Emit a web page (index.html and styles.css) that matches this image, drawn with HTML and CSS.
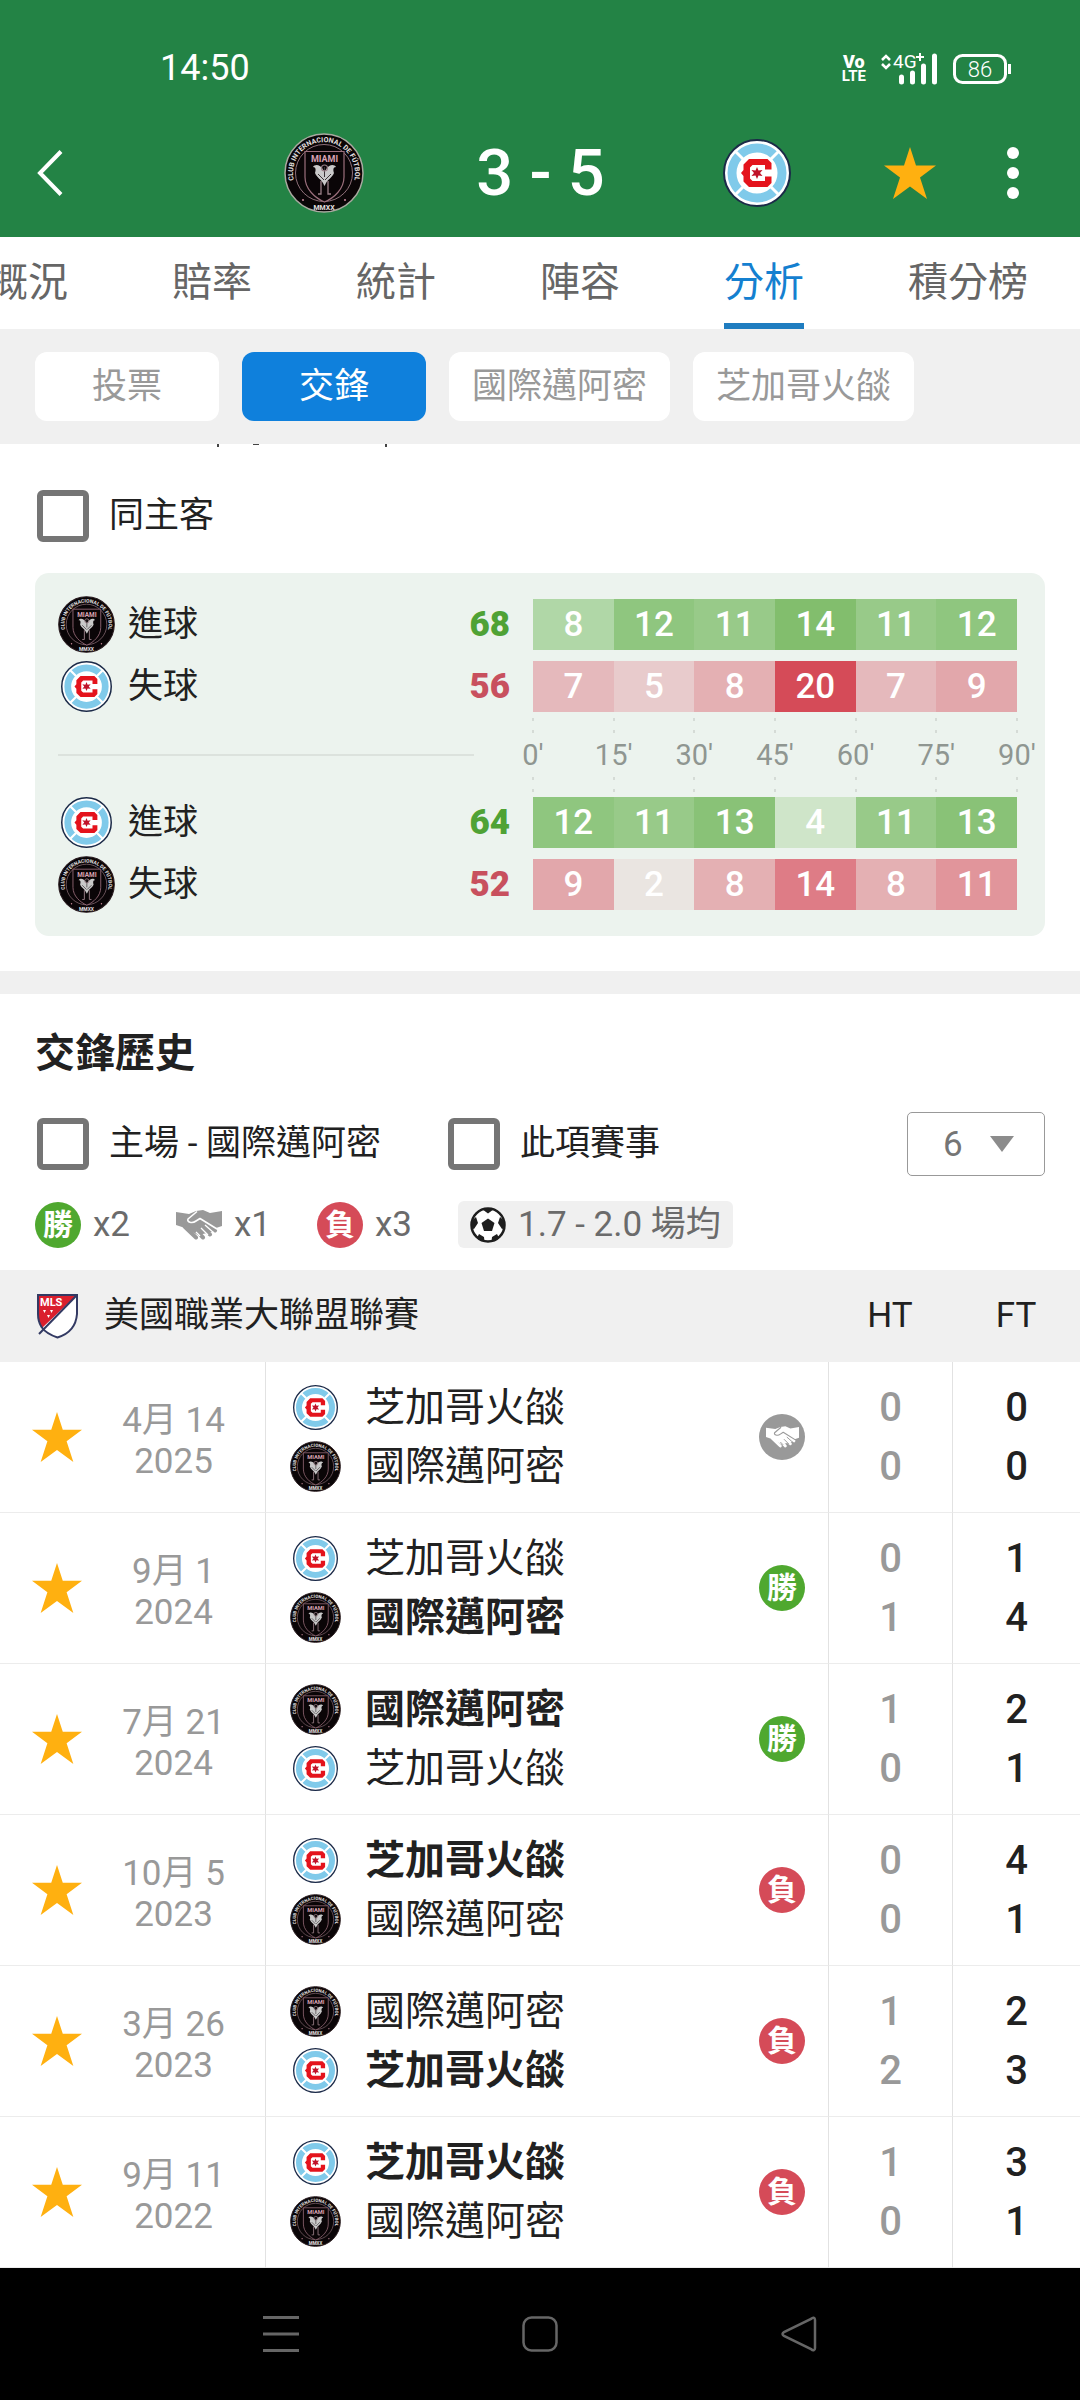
FILE: index.html
```html
<!DOCTYPE html>
<html lang="zh-Hant">
<head>
    <meta charset="UTF-8">
    <meta name="viewport" content="width=device-width, initial-scale=1.0">
    <title>國際邁阿密 3 - 5 芝加哥火燄</title>
    <link rel="stylesheet" href="styles.css">
</head>
<body>
    <!-- shared icons -->
    <svg class="sprite" aria-hidden="true">
        <symbol id="miami" viewBox="0 0 80 80">
            <circle cx="40" cy="40" r="39" fill="#0a0507" stroke="currentColor" stroke-width="1.5"/>
            <circle cx="40" cy="40" r="28.5" fill="none" stroke="#8d6f78" stroke-width="1"/>
            <path id="miamiRing" d="M14 57A31 31 0 1 1 66 57" fill="none"/>
            <text class="crest-text" font-size="7" text-anchor="middle"><textPath href="#miamiRing" startOffset="50%">CLUB INTERNACIONAL DE FÚTBOL</textPath></text>
            <path d="M21 18.500H60V44C60 56 50 65 40.500 69C31 65 21 56 21 44Z" fill="#0a0507" stroke="#9b6f7c" stroke-width="1.200"/>
            <text class="crest-text pink" x="40.500" y="29" font-size="9" text-anchor="middle">MIAMI</text>
            <path d="M40 38C36 31 31 31 29 34C32 34 32 37 31 40C33 45 37 46 39 50L40.500 53L42 50C44 46 48 45 50 40C49 37 49 34 52 34C50 31 45 31 41 38Z" fill="#c9c9c9"/>
            <path d="M34 41L40 47M47 41L41 47M40.500 34V44" stroke="#3a3336" stroke-width="1" fill="none"/>
            <circle cx="40.500" cy="35" r="3" fill="none" stroke="#9b8088" stroke-width="1.200"/>
            <path d="M37 48V61H34M44 48V61H47" fill="none" stroke="#9b8088" stroke-width="1.300"/>
            <text class="crest-text" x="40" y="77" font-size="7" text-anchor="middle">MMXX</text>
            <circle cx="19" cy="67" r="1" fill="#c98a9c"/>
            <circle cx="61" cy="67" r="1" fill="#c98a9c"/>
        </symbol>
        <symbol id="fire" viewBox="0 0 68 68">
            <circle cx="34" cy="34" r="33" fill="#fff" stroke="#1b2a48" stroke-width="2"/>
            <circle cx="34" cy="34" r="25" fill="none" stroke="#80caea" stroke-width="9"/>
            <path d="M12 12L20 20M56 12L48 20M12 56L20 48M56 56L48 48" stroke="#fff" stroke-width="3"/>
            <path d="M48.500 30.500V24L44.500 20H26L20.500 25.500V31L18 34L20.500 37V42.500L26 48H44.500L48.500 44V37.500H42V42H29.500L27 39.500V28.500L29.500 26H42V30.500Z" fill="#e4131c"/>
            <path d="M34 28L35.500 31.500L39.500 31L37 34L39.500 37L35.500 36.500L34 40L32.500 36.500L28.500 37L31 34L28.500 31L32.500 31.500Z" fill="#c01228"/>
        </symbol>
        <symbol id="star" viewBox="0 0 52 52">
            <path d="M26 0L32 18.500H52L36 30.500L43 52L26 39.500L9 52L16 30.500L0 18.500H20Z" fill="#ffb010"/>
        </symbol>
        <symbol id="shake" viewBox="0 0 46 30">
            <path d="M0 2L13 4L20 1L27 0L34 3L46 1V16L40 18L36 22L22 25L6 17L0 15Z" fill="currentColor"/>
            <path d="M9 17L20 27.500M15 15L27 27.500M21 13L34 24.500M26 10L39 20.500" stroke="currentColor" stroke-width="4" stroke-linecap="round"/>
            <path d="M20 22L24 26M25 18L32 25M29 15L38 23" stroke="var(--gap)" stroke-width="1.300"/>
            <path d="M21 1.500L12 9C10.500 12 16 14 20 11L24 8.500L41 19" fill="none" stroke="var(--gap)" stroke-width="1.600" stroke-linejoin="round"/>
        </symbol>
    </svg>

    <header class="app-header">
        <div class="status-bar">
            <span class="clock">14:50</span>
            <div class="status-icons">
                <span class="volte"><b>Vo</b><i>LTE</i></span>
                <svg width="58" height="32" viewBox="0 0 58 32" fill="none">
                    <path d="M2 7L6 3L10 7M2 11L6 15L10 11" stroke="#fff" stroke-width="2.500"/>
                    <text x="13" y="15" class="net">4G</text>
                    <path d="M36 4H44M40 0V8" stroke="#fff" stroke-width="2"/>
                    <path d="M21.500 24V29M32.500 20V29M43.500 13V29M54.500 3V29" stroke="#fff" stroke-width="5" stroke-linecap="round"/>
                </svg>
                <svg width="60" height="32" viewBox="0 0 60 32" fill="none">
                    <rect x="2.500" y="2.500" width="51" height="27" rx="8" stroke="#fff" stroke-width="3"/>
                    <path d="M57.500 11V21" stroke="#fff" stroke-width="3"/>
                    <text x="28" y="24" class="battery" text-anchor="middle">86</text>
                </svg>
            </div>
        </div>
        <div class="match-bar">
            <button class="icon-btn back" aria-label="返回">
                <svg width="28" height="46" viewBox="0 0 28 46"><path d="M25 1.500L4 23L25 44.500" fill="none" stroke="#fff" stroke-width="4"/></svg>
            </button>
            <div class="score">
                <svg class="crest-lg"><use href="#miami"/></svg>
                <h1>3 - 5</h1>
                <svg class="crest-lg fire-lg"><use href="#fire"/></svg>
            </div>
            <div class="actions">
                <button class="icon-btn" aria-label="收藏"><svg width="52" height="52"><use href="#star"/></svg></button>
                <button class="icon-btn" aria-label="更多">
                    <svg width="12" height="52" viewBox="0 0 12 52" fill="#fff"><circle cx="6" cy="6" r="6"/><circle cx="6" cy="26" r="6"/><circle cx="6" cy="46" r="6"/></svg>
                </button>
            </div>
        </div>
    </header>

    <nav class="tabs">
        <a href="#">概況</a>
        <a href="#">賠率</a>
        <a href="#">統計</a>
        <a href="#">陣容</a>
        <a href="#" class="active">分析</a>
        <a href="#">積分榜</a>
    </nav>

    <div class="chips">
        <button class="chip">投票</button>
        <button class="chip active">交鋒</button>
        <button class="chip">國際邁阿密</button>
        <button class="chip">芝加哥火燄</button>
    </div>

    <main>
        <section class="goals">
            <!-- bottom edge of the line scrolled under the chips -->
            <svg class="scrolled" width="172" height="3" viewBox="0 0 172 3" fill="#444"><rect x="0" width="2" height="3"/><rect x="36" width="6" height="1"/><rect x="168" width="2" height="3"/></svg>
            <label class="check"><input type="checkbox">同主客</label>

            <div class="goal-card">
                <div class="goal-row">
                    <div class="goal-team"><svg class="crest"><use href="#miami"/></svg>進球<b class="win">68</b></div>
                    <div class="cells"><span class="g8">8</span><span class="g12">12</span><span class="g11">11</span><span class="g14">14</span><span class="g11">11</span><span class="g12">12</span></div>
                </div>
                <div class="goal-row">
                    <div class="goal-team"><svg class="crest fire"><use href="#fire"/></svg>失球<b class="lose">56</b></div>
                    <div class="cells"><span class="r7">7</span><span class="r5">5</span><span class="r8">8</span><span class="r20">20</span><span class="r7">7</span><span class="r9">9</span></div>
                </div>
                <div class="goal-row axis-row">
                    <div class="axis-line"></div>
                    <div class="axis"><span>0'</span><span>15'</span><span>30'</span><span>45'</span><span>60'</span><span>75'</span><span>90'</span></div>
                </div>
                <div class="goal-row">
                    <div class="goal-team"><svg class="crest fire"><use href="#fire"/></svg>進球<b class="win">64</b></div>
                    <div class="cells"><span class="g12">12</span><span class="g11">11</span><span class="g13">13</span><span class="g4">4</span><span class="g11">11</span><span class="g13">13</span></div>
                </div>
                <div class="goal-row">
                    <div class="goal-team"><svg class="crest"><use href="#miami"/></svg>失球<b class="lose">52</b></div>
                    <div class="cells"><span class="r9">9</span><span class="r2">2</span><span class="r8">8</span><span class="r14">14</span><span class="r8">8</span><span class="r11">11</span></div>
                </div>
            </div>
        </section>

        <section class="history">
            <h2>交鋒歷史</h2>
            <div class="filters">
                <label class="check home"><input type="checkbox">主場 - 國際邁阿密</label>
                <label class="check"><input type="checkbox">此項賽事</label>
                <div class="count">
                    <select aria-label="場數"><option>6</option><option>10</option></select>
                    <svg width="26" height="16" viewBox="0 0 26 16"><path d="M1 0H25L13 16Z" fill="#8c8c8c"/></svg>
                </div>
            </div>
            <div class="summary">
                <div class="sum-item"><span class="badge win">勝</span>x2</div>
                <div class="sum-item"><svg class="shake"><use href="#shake"/></svg>x1</div>
                <div class="sum-item"><span class="badge lose">負</span>x3</div>
                <div class="average">
                    <svg width="36" height="36" viewBox="0 0 36 36">
                        <circle cx="18" cy="18" r="16.500" fill="#fff" stroke="#1e1e1e" stroke-width="2.500"/>
                        <path d="M18 11.500L24.500 16L22 24H14L11.500 16ZM12 2H24L18 6.500ZM1.500 14L6 10L8 16L4 22L1 21ZM34.500 14L30 10L28 16L32 22L35 21ZM9 27L14 30L14.500 35L7 31ZM27 27L22 30L21.500 35L29 31Z" fill="#1e1e1e"/>
                    </svg>
                    1.7 - 2.0 場均
                </div>
            </div>

            <table class="matches">
                <thead>
                    <tr>
                        <th colspan="4">
                            <div class="league">
                                <svg width="43" height="46" viewBox="0 0 43 46">
                                    <path d="M2 2H41V21C40 34 33 41 21.500 44.500C14 42 9 39 5.500 34C3 30 2 26 2 21Z" fill="#fff"/>
                                    <path d="M2 2H41L6 35C3 30 2 26 2 21Z" fill="#da1f2d"/>
                                    <path d="M2 2H41V21C40 34 33 41 21.500 44.500C14 42 9 39 5.500 34C3 30 2 26 2 21Z" fill="none" stroke="#333a63" stroke-width="2"/>
                                    <path d="M41 2L3 41" stroke="#333a63" stroke-width="2"/>
                                    <text x="4" y="13" class="mls">MLS</text>
                                    <path d="M7 17H10L8.500 20ZM14 17H17L15.500 20ZM11 22H14L12.500 25Z" fill="#fff"/>
                                </svg>
                                美國職業大聯盟聯賽
                            </div>
                        </th>
                        <th class="ht">HT</th>
                        <th class="ft">FT</th>
                    </tr>
                </thead>
                <tbody>
                    <tr>
                        <td class="fav"><svg width="50" height="50"><use href="#star"/></svg></td>
                        <td class="date">4月 14<br>2025</td>
                        <td class="teams">
                            <div><svg class="crest fire"><use href="#fire"/></svg>芝加哥火燄</div>
                            <div><svg class="crest"><use href="#miami"/></svg>國際邁阿密</div>
                        </td>
                        <td class="result"><span class="badge draw"><svg class="shake"><use href="#shake"/></svg></span></td>
                        <td class="ht">0<br>0</td>
                        <td class="ft">0<br>0</td>
                    </tr>
                    <tr>
                        <td class="fav"><svg width="50" height="50"><use href="#star"/></svg></td>
                        <td class="date">9月 1<br>2024</td>
                        <td class="teams">
                            <div><svg class="crest fire"><use href="#fire"/></svg>芝加哥火燄</div>
                            <div class="winner"><svg class="crest"><use href="#miami"/></svg>國際邁阿密</div>
                        </td>
                        <td class="result"><span class="badge win">勝</span></td>
                        <td class="ht">0<br>1</td>
                        <td class="ft">1<br>4</td>
                    </tr>
                    <tr>
                        <td class="fav"><svg width="50" height="50"><use href="#star"/></svg></td>
                        <td class="date">7月 21<br>2024</td>
                        <td class="teams">
                            <div class="winner"><svg class="crest"><use href="#miami"/></svg>國際邁阿密</div>
                            <div><svg class="crest fire"><use href="#fire"/></svg>芝加哥火燄</div>
                        </td>
                        <td class="result"><span class="badge win">勝</span></td>
                        <td class="ht">1<br>0</td>
                        <td class="ft">2<br>1</td>
                    </tr>
                    <tr>
                        <td class="fav"><svg width="50" height="50"><use href="#star"/></svg></td>
                        <td class="date">10月 5<br>2023</td>
                        <td class="teams">
                            <div class="winner"><svg class="crest fire"><use href="#fire"/></svg>芝加哥火燄</div>
                            <div><svg class="crest"><use href="#miami"/></svg>國際邁阿密</div>
                        </td>
                        <td class="result"><span class="badge lose">負</span></td>
                        <td class="ht">0<br>0</td>
                        <td class="ft">4<br>1</td>
                    </tr>
                    <tr>
                        <td class="fav"><svg width="50" height="50"><use href="#star"/></svg></td>
                        <td class="date">3月 26<br>2023</td>
                        <td class="teams">
                            <div><svg class="crest"><use href="#miami"/></svg>國際邁阿密</div>
                            <div class="winner"><svg class="crest fire"><use href="#fire"/></svg>芝加哥火燄</div>
                        </td>
                        <td class="result"><span class="badge lose">負</span></td>
                        <td class="ht">1<br>2</td>
                        <td class="ft">2<br>3</td>
                    </tr>
                    <tr>
                        <td class="fav"><svg width="50" height="50"><use href="#star"/></svg></td>
                        <td class="date">9月 11<br>2022</td>
                        <td class="teams">
                            <div class="winner"><svg class="crest fire"><use href="#fire"/></svg>芝加哥火燄</div>
                            <div><svg class="crest"><use href="#miami"/></svg>國際邁阿密</div>
                        </td>
                        <td class="result"><span class="badge lose">負</span></td>
                        <td class="ht">1<br>0</td>
                        <td class="ft">3<br>1</td>
                    </tr>
                </tbody>
            </table>
        </section>
    </main>

    <div class="system-nav">
        <button class="icon-btn" aria-label="選單"><svg width="36" height="36" viewBox="0 0 36 36"><path d="M0 1.500H36M0 18H36M0 34.500H36" stroke="#666" stroke-width="3"/></svg></button>
        <button class="icon-btn" aria-label="主畫面"><svg width="36" height="36" viewBox="0 0 36 36"><rect x="1.500" y="1.500" width="33" height="33" rx="8" fill="none" stroke="#666" stroke-width="2.500"/></svg></button>
        <button class="icon-btn" aria-label="上一頁"><svg width="36" height="36" viewBox="0 0 36 36"><path d="M34 4V32C34 34.500 32 35 30 33L3 20C1 18.500 1 17.500 3 16L30 3C32 1 34 1.500 34 4Z" fill="none" stroke="#666" stroke-width="2.500"/></svg></button>
    </div>
</body>
</html>
```

FILE: styles.css
```css
* {
    box-sizing: border-box;
}

body {
    margin: 0;
    min-height: 100vh;
    display: flex;
    flex-direction: column;
    font-family: Roboto, "Noto Sans CJK TC", sans-serif;
    font-size: 35px;
    line-height: 1.2;
    color: #212121;
    background: #fff;
    overflow-x: hidden;
}

svg {
    display: block;
    flex-shrink: 0;
}

.sprite {
    display: none;
}

.crest-text {
    font-family: Roboto, sans-serif;
    font-weight: 700;
    fill: #e4e0e0;
}

.crest-text.pink {
    fill: #d9a3b3;
}

.icon-btn {
    padding: 0;
    border: none;
    background: none;
    cursor: pointer;
}

/* header */
.app-header {
    background: #238345;
    color: #fff;
}

.status-bar {
    height: 109px;
    padding: 29px 68px 0 160px;
    display: flex;
    align-items: center;
    justify-content: space-between;
}

.clock {
    font-size: 36px;
}

.status-icons {
    display: flex;
    align-items: center;
    gap: 14px;
}

.volte {
    display: flex;
    flex-direction: column;
    align-items: center;
    font-weight: 700;
    line-height: 15px;
}

.volte b {
    font-size: 18px;
}

.volte i {
    font-size: 15px;
    font-style: normal;
}

.net {
    font-size: 19px;
    fill: #fff;
}

.battery {
    font-size: 22px;
    font-weight: 300;
    fill: #fff;
}

.match-bar {
    height: 128px;
    display: grid;
    grid-template-columns: 1fr auto 1fr;
    align-items: center;
    padding: 0 61px 0 36px;
}

.back {
    justify-self: start;
}

.score {
    width: 513px;
    margin-left: 26px;
    display: flex;
    align-items: center;
    justify-content: space-between;
}

.score h1 {
    margin: 0;
    font-size: 65px;
    font-weight: 500;
}

.crest-lg {
    width: 80px;
    height: 80px;
    color: #a9a9a0;
}

.crest-lg.fire-lg {
    padding: 6px;
}

.actions {
    display: flex;
    justify-content: flex-end;
    gap: 71px;
}

/* tabs */
.tabs {
    height: 92px;
    display: flex;
    gap: 104px;
    margin-left: -12px;
    background: #fff;
}

.tabs a {
    flex-shrink: 0;
    display: flex;
    align-items: center;
    font-size: 40px;
    color: #666;
    text-decoration: none;
    border-bottom: 6px solid transparent;
    border-top: 6px solid transparent;
}

.tabs a.active {
    color: #1480d0;
    border-bottom-color: #1f7dc0;
}

.chips {
    display: flex;
    gap: 23px;
    padding: 23px 35px;
    background: #f0f0f0;
}

.chip {
    min-width: 184px;
    height: 69px;
    padding: 0 23px;
    border: none;
    border-radius: 12px;
    background: #fff;
    color: #999;
    font-family: inherit;
    font-size: 35px;
    line-height: 42px;
}

.chip.active {
    background: #0f80dc;
    color: #fff;
}

/* goal distribution */
.goals {
    padding: 0 35px 35px;
    border-bottom: 23px solid #f0f0f0;
}

.scrolled {
    margin-left: 182px;
}

.check {
    display: flex;
    align-items: center;
    gap: 20px;
    padding-left: 2px;
}

.check input {
    appearance: none;
    width: 52px;
    height: 52px;
    margin: 0;
    border: 6px solid #757575;
    border-radius: 6px;
}

.goals .check {
    padding-top: 43px;
    margin-bottom: 31px;
}

.goal-card {
    display: flex;
    flex-direction: column;
    gap: 11px;
    padding: 26px 28px 26px 23px;
    border-radius: 14px;
    background: #ecf3ee;
}

.goal-row {
    height: 51px;
    display: grid;
    grid-template-columns: 452fr 484fr;
    grid-template-rows: 100%;
    gap: 23px;
    align-items: center;
}

.goal-team {
    height: 51px;
    display: flex;
    align-items: center;
    gap: 13px;
}

.goal-team b {
    margin-left: auto;
    font-weight: 900;
}

.crest {
    width: 57px;
    height: 57px;
    color: #2a1c20;
}

.crest.fire {
    padding: 3px;
}

b.win {
    color: #4fa235;
}

b.lose {
    color: #c8505e;
}

.cells {
    display: grid;
    grid-template-columns: repeat(6, 1fr);
    line-height: 51px;
    text-align: center;
    font-weight: 500;
    color: #fff;
}

.g4 { background: #cfe5c9; }
.g8 { background: #b0d7a7; }
.g11 { background: #98ca89; }
.g12 { background: #8fc67f; }
.g13 { background: #89c277; }
.g14 { background: #82be6d; }
.r2 { background: #eae5e1; }
.r5 { background: #e8cbcc; }
.r7 { background: #e5b9bc; }
.r8 { background: #e4b0b3; }
.r9 { background: #e2a7ab; }
.r11 { background: #e1959b; }
.r14 { background: #de7c86; }
.r20 { background: #d54b58; }

.axis-row {
    height: 63px;
}

.axis-line {
    width: 92%;
    height: 2px;
    background: #dce2dd;
}

.axis {
    display: flex;
    justify-content: space-between;
    font-size: 29px;
    line-height: 44px;
    color: #8f9691;
}

.axis span {
    width: 0;
    display: flex;
    flex-direction: column;
    align-items: center;
}

.axis span::before,
.axis span::after {
    content: "";
    width: 2px;
    height: 9px;
    border-top: 3px solid #d5dbd6;
    border-bottom: 3px solid #d5dbd6;
}

/* history */
.history h2 {
    margin: 0;
    padding: 30px 35px 0;
    font-size: 40px;
    line-height: 60px;
    font-weight: 700;
}

.filters {
    display: flex;
    align-items: center;
    padding: 0 35px;
    margin-top: 28px;
}

.check.home {
    width: 411px;
}

.count {
    position: relative;
    width: 138px;
    margin-left: auto;
}

.count select {
    display: block;
    appearance: none;
    width: 100%;
    height: 64px;
    padding: 0 35px;
    border: 1px solid #999;
    border-radius: 5px;
    background: #fff;
    font-family: inherit;
    font-size: 35px;
    color: #757575;
}

.count svg {
    position: absolute;
    right: 30px;
    top: 24px;
    pointer-events: none;
}

.summary {
    display: flex;
    align-items: center;
    padding: 25px 35px 22px;
    color: #6b6b6b;
}

.sum-item {
    width: 141px;
    display: flex;
    align-items: center;
    gap: 12px;
}

.badge {
    width: 46px;
    height: 46px;
    border-radius: 50%;
    display: flex;
    align-items: center;
    justify-content: center;
    font-size: 30px;
    font-weight: 700;
    line-height: 46px;
    color: #fff;
}

.badge.win {
    background: #4fa82f;
}

.badge.lose {
    background: #d54b58;
}

.badge.draw {
    --gap: #999;
    background: #999;
}

.shake {
    width: 46px;
    height: 30px;
}

.sum-item .shake {
    --gap: #fff;
    color: #999;
}

.badge .shake {
    width: 33px;
    height: 22px;
}

.average {
    height: 47px;
    display: flex;
    align-items: center;
    gap: 12px;
    padding: 0 12px;
    border-radius: 6px;
    background: #f0f0f0;
}

.matches {
    width: 100%;
    table-layout: auto;
    border-spacing: 0;
}

.matches th {
    height: 92px;
    padding: 0;
    background: #f0f0f0;
    font-weight: 400;
}

.league {
    display: flex;
    align-items: center;
    gap: 25px;
    padding-left: 36px;
}

.mls {
    font-size: 11px;
    font-weight: 700;
    fill: #fff;
}

.matches td {
    height: 151px;
    padding: 0;
    border-bottom: 1px solid #ececec;
}

.matches .fav {
    width: 82px;
    padding-left: 32px;
}

.matches .date {
    width: 183px;
    padding-top: 8px;
    text-align: center;
    line-height: 41px;
    color: #999;
}

.teams div {
    display: flex;
    align-items: center;
    gap: 24px;
    height: 59px;
    font-size: 40px;
}

.matches .teams {
    padding-left: 24px;
    border-left: 1px solid #e2e2e2;
}

.teams .crest {
    width: 51px;
    height: 51px;
}

.teams .winner {
    font-weight: 700;
}

.result {
    width: 69px;
}

.matches .ht,
.matches .ft {
    width: 124px;
    text-align: center;
}

.matches .ft {
    width: 128px;
}

td.ht,
td.ft {
    border-left: 1px solid #e2e2e2;
    font-size: 40px;
    line-height: 59px;
    font-weight: 500;
}

td.ht {
    color: #999;
}

/* system bar */
.system-nav {
    flex: 1;
    min-height: 132px;
    padding: 0 14%;
    display: flex;
    align-items: center;
    background: #000;
}

.system-nav .icon-btn {
    flex: 1;
    display: flex;
    justify-content: center;
}
```
